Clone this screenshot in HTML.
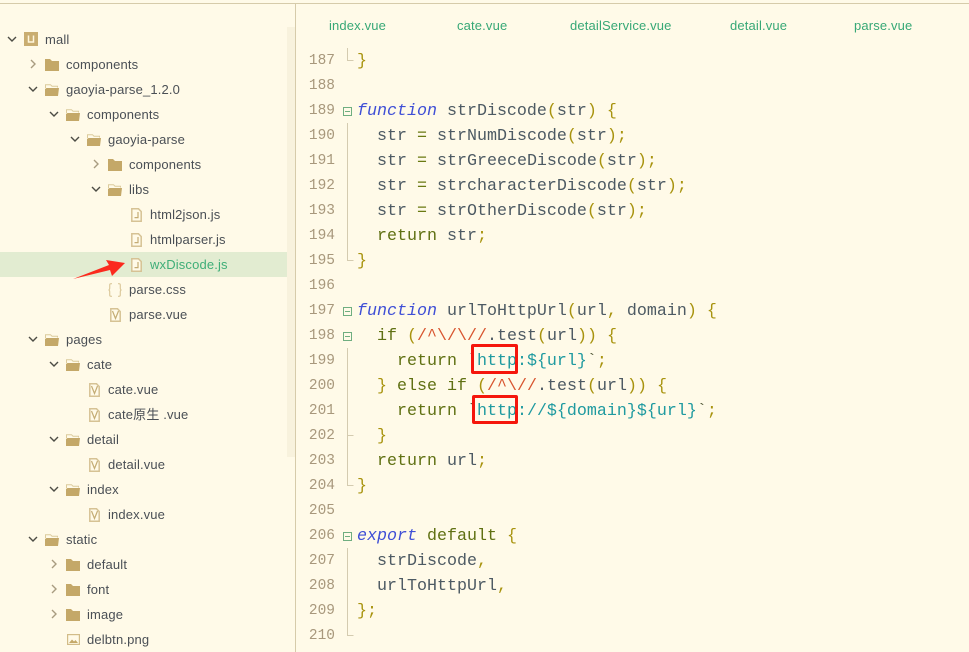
<!DOCTYPE html>
<html><head><meta charset="utf-8">
<style>
html,body{margin:0;padding:0}
body{width:969px;height:652px;position:relative;overflow:hidden;background:#fffae8;font-family:"Liberation Sans","Noto Sans CJK SC",sans-serif}
.a{position:absolute}
.t{position:absolute;font-size:13px;line-height:25px;height:25px;color:#4a4f55;white-space:pre;letter-spacing:.15px}
.tab{position:absolute;top:13px;font-size:13px;line-height:25px;color:#37a876;white-space:pre;letter-spacing:.15px}
.n{position:absolute;left:296px;width:39px;text-align:right;font:14.5px/25px "Liberation Mono",monospace;color:#a8987c;height:25px}
.c{position:absolute;left:357px;font:16.67px/25px "Liberation Mono",monospace;color:#4d5a63;white-space:pre;height:25px}
.k{color:#6a7a12}.p{color:#a8930e}.f{color:#3f4fd6;font-style:italic}.s{color:#1f9aa0}.r{color:#d8552f}.w{color:#5f7012}.b{color:#5a6040}
svg{position:absolute;overflow:visible}
</style></head><body>
<svg width="0" height="0" style="left:0;top:0">
<defs>
<symbol id="cd" viewBox="0 0 10 10"><path d="M1 3l4 4 4-4" fill="none" stroke="#4c4c44" stroke-width="1.4"/></symbol>
<symbol id="cr" viewBox="0 0 10 10"><path d="M3 1l4 4-4 4" fill="none" stroke="#a89c80" stroke-width="1.4"/></symbol>
<symbol id="fc" viewBox="0 0 14 12"><path d="M0 0h5l2 2h7v10H0z" fill="#c4a868"/></symbol>
<symbol id="fo" viewBox="0 0 14 12"><path d="M.5 4V.7h5l1.500 1.500h5.500V3.500" fill="none" stroke="#dccb9c"/><path d="M1.500 4H14l-1 8H0V5z" fill="#c4a868"/></symbol>
<symbol id="js" viewBox="0 0 11 14"><path d="M.8.800h6.700l2.700 2.700v9.700H.8z" fill="#fffae8" stroke="#d6c294" stroke-width="1.500"/><path d="M7 4v5.600H3.500" fill="none" stroke="#c4ac74" stroke-width="1.200"/></symbol>
<symbol id="vu" viewBox="0 0 11 14"><path d="M.8.800h6.700l2.700 2.700v9.700H.8z" fill="#fffae8" stroke="#d6c294" stroke-width="1.500"/><path d="M2.500 3l3 7.500 3-7.500" fill="none" stroke="#c4ac74" stroke-width="1.200"/></symbol>
<symbol id="fold" viewBox="0 0 9 9"><rect x=".5" y=".5" width="8" height="8" fill="none" stroke="#6fae80"/><path d="M2 4.500h5" stroke="#6fae80"/></symbol>
</defs>
</svg>

<div class="a" style="left:0;top:3px;width:969px;height:1px;background:#d6cbaa"></div>
<div class="a" style="left:295px;top:3px;width:1px;height:649px;background:#d6cbaa"></div>
<div class="a" style="left:287px;top:27px;width:8px;height:430px;background:#f8f2dd"></div>
<div class="a" style="left:0;top:252px;width:287px;height:25px;background:#e2ecd1"></div>

<!-- tree -->
<svg style="left:7px;top:34px" width="10" height="10"><use href="#cd"/></svg>
<svg style="left:24px;top:32px" width="14" height="14"><rect width="14" height="14" fill="#c9ad70"/><path d="M4.500 3.500v6.500h5V3.500" fill="none" stroke="#fff6dc" stroke-width="1.500"/></svg>
<div class="t" style="left:45px;top:27px">mall</div>

<svg style="left:28px;top:59px" width="10" height="10"><use href="#cr"/></svg>
<svg style="left:45px;top:59px" width="14" height="12"><use href="#fc"/></svg>
<div class="t" style="left:66px;top:52px">components</div>

<svg style="left:28px;top:84px" width="10" height="10"><use href="#cd"/></svg>
<svg style="left:45px;top:84px" width="14" height="12"><use href="#fo"/></svg>
<div class="t" style="left:66px;top:77px">gaoyia-parse_1.2.0</div>

<svg style="left:49px;top:109px" width="10" height="10"><use href="#cd"/></svg>
<svg style="left:66px;top:109px" width="14" height="12"><use href="#fo"/></svg>
<div class="t" style="left:87px;top:102px">components</div>

<svg style="left:70px;top:134px" width="10" height="10"><use href="#cd"/></svg>
<svg style="left:87px;top:134px" width="14" height="12"><use href="#fo"/></svg>
<div class="t" style="left:108px;top:127px">gaoyia-parse</div>

<svg style="left:91px;top:159px" width="10" height="10"><use href="#cr"/></svg>
<svg style="left:108px;top:159px" width="14" height="12"><use href="#fc"/></svg>
<div class="t" style="left:129px;top:152px">components</div>

<svg style="left:91px;top:184px" width="10" height="10"><use href="#cd"/></svg>
<svg style="left:108px;top:184px" width="14" height="12"><use href="#fo"/></svg>
<div class="t" style="left:129px;top:177px">libs</div>

<svg style="left:131px;top:208px" width="11" height="14"><use href="#js"/></svg>
<div class="t" style="left:150px;top:202px">html2json.js</div>
<svg style="left:131px;top:233px" width="11" height="14"><use href="#js"/></svg>
<div class="t" style="left:150px;top:227px">htmlparser.js</div>
<svg style="left:131px;top:258px" width="11" height="14"><use href="#js"/></svg>
<div class="t" style="left:150px;top:252px;color:#3fae78">wxDiscode.js</div>

<svg style="left:108px;top:283px" width="14" height="14"><path d="M4 .7H3Q1.700.7 1.700 2v3Q1.700 7 .5 7q1.200 0 1.200 2v3q0 1.300 1.300 1.300h1M10 .7h1q1.300 0 1.300 1.300v3q0 2 1.200 2-1.200 0-1.200 2v3q0 1.300-1.300 1.300h-1" fill="none" stroke="#dcc99c" stroke-width="1.200"/></svg>
<div class="t" style="left:129px;top:277px">parse.css</div>
<svg style="left:110px;top:308px" width="11" height="14"><use href="#vu"/></svg>
<div class="t" style="left:129px;top:302px">parse.vue</div>

<svg style="left:28px;top:334px" width="10" height="10"><use href="#cd"/></svg>
<svg style="left:45px;top:334px" width="14" height="12"><use href="#fo"/></svg>
<div class="t" style="left:66px;top:327px">pages</div>

<svg style="left:49px;top:359px" width="10" height="10"><use href="#cd"/></svg>
<svg style="left:66px;top:359px" width="14" height="12"><use href="#fo"/></svg>
<div class="t" style="left:87px;top:352px">cate</div>
<svg style="left:89px;top:383px" width="11" height="14"><use href="#vu"/></svg>
<div class="t" style="left:108px;top:377px">cate.vue</div>
<svg style="left:89px;top:408px" width="11" height="14"><use href="#vu"/></svg>
<div class="t" style="left:108px;top:402px">cate原生 .vue</div>

<svg style="left:49px;top:434px" width="10" height="10"><use href="#cd"/></svg>
<svg style="left:66px;top:434px" width="14" height="12"><use href="#fo"/></svg>
<div class="t" style="left:87px;top:427px">detail</div>
<svg style="left:89px;top:458px" width="11" height="14"><use href="#vu"/></svg>
<div class="t" style="left:108px;top:452px">detail.vue</div>

<svg style="left:49px;top:484px" width="10" height="10"><use href="#cd"/></svg>
<svg style="left:66px;top:484px" width="14" height="12"><use href="#fo"/></svg>
<div class="t" style="left:87px;top:477px">index</div>
<svg style="left:89px;top:508px" width="11" height="14"><use href="#vu"/></svg>
<div class="t" style="left:108px;top:502px">index.vue</div>

<svg style="left:28px;top:534px" width="10" height="10"><use href="#cd"/></svg>
<svg style="left:45px;top:534px" width="14" height="12"><use href="#fo"/></svg>
<div class="t" style="left:66px;top:527px">static</div>

<svg style="left:49px;top:559px" width="10" height="10"><use href="#cr"/></svg>
<svg style="left:66px;top:559px" width="14" height="12"><use href="#fc"/></svg>
<div class="t" style="left:87px;top:552px">default</div>
<svg style="left:49px;top:584px" width="10" height="10"><use href="#cr"/></svg>
<svg style="left:66px;top:584px" width="14" height="12"><use href="#fc"/></svg>
<div class="t" style="left:87px;top:577px">font</div>
<svg style="left:49px;top:609px" width="10" height="10"><use href="#cr"/></svg>
<svg style="left:66px;top:609px" width="14" height="12"><use href="#fc"/></svg>
<div class="t" style="left:87px;top:602px">image</div>
<svg style="left:67px;top:634px" width="13" height="11"><rect x=".6" y=".6" width="11.800" height="9.800" fill="none" stroke="#d2bc88" stroke-width="1.200"/><path d="M2 9l3-3.500 2 2 1.500-1.500L11 9z" fill="#c4a868"/></svg>
<div class="t" style="left:87px;top:627px">delbtn.png</div>

<!-- arrow -->
<svg style="left:0;top:0" width="969" height="652"><polygon points="73,279 109,265 106,260 125,263 112,276 110,270" fill="#fb2a1e"/></svg>

<!-- tabs -->
<div class="tab" style="left:329px">index.vue</div>
<div class="tab" style="left:457px">cate.vue</div>
<div class="tab" style="left:570px">detailService.vue</div>
<div class="tab" style="left:730px">detail.vue</div>
<div class="tab" style="left:854px">parse.vue</div>

<!-- line numbers -->
<div class="n" style="top:49px">187</div><div class="n" style="top:74px">188</div><div class="n" style="top:99px">189</div><div class="n" style="top:124px">190</div><div class="n" style="top:149px">191</div><div class="n" style="top:174px">192</div><div class="n" style="top:199px">193</div><div class="n" style="top:224px">194</div><div class="n" style="top:249px">195</div><div class="n" style="top:274px">196</div><div class="n" style="top:299px">197</div><div class="n" style="top:324px">198</div><div class="n" style="top:349px">199</div><div class="n" style="top:374px">200</div><div class="n" style="top:399px">201</div><div class="n" style="top:424px">202</div><div class="n" style="top:449px">203</div><div class="n" style="top:474px">204</div><div class="n" style="top:499px">205</div><div class="n" style="top:524px">206</div><div class="n" style="top:549px">207</div><div class="n" style="top:574px">208</div><div class="n" style="top:599px">209</div><div class="n" style="top:624px">210</div>

<!-- fold guides -->
<svg style="left:0;top:0" width="969" height="652">
<g fill="none" stroke="#d4cbb0">
<path d="M347.500 48v12.500h6"/>
<path d="M347.500 123v137.500h6"/>
<path d="M347.500 348v137.500h6M347.500 435.500h6"/>
<path d="M347.500 548v87.500h6"/>
</g></svg>
<svg style="left:343px;top:107px" width="9" height="9"><use href="#fold"/></svg>
<svg style="left:343px;top:307px" width="9" height="9"><use href="#fold"/></svg>
<svg style="left:343px;top:332px" width="9" height="9"><use href="#fold"/></svg>
<svg style="left:343px;top:532px" width="9" height="9"><use href="#fold"/></svg>

<!-- code -->
<div class="c" style="top:49px"><span class="p">}</span></div>
<div class="c" style="top:99px"><span class="f">function</span> strDiscode<span class="p">(</span>str<span class="p">)</span> <span class="p">{</span></div>
<div class="c" style="top:124px">  str <span class="k">=</span> strNumDiscode<span class="p">(</span>str<span class="p">);</span></div>
<div class="c" style="top:149px">  str <span class="k">=</span> strGreeceDiscode<span class="p">(</span>str<span class="p">);</span></div>
<div class="c" style="top:174px">  str <span class="k">=</span> strcharacterDiscode<span class="p">(</span>str<span class="p">);</span></div>
<div class="c" style="top:199px">  str <span class="k">=</span> strOtherDiscode<span class="p">(</span>str<span class="p">);</span></div>
<div class="c" style="top:224px">  <span class="w">return</span> str<span class="p">;</span></div>
<div class="c" style="top:249px"><span class="p">}</span></div>
<div class="c" style="top:299px"><span class="f">function</span> urlToHttpUrl<span class="p">(</span>url<span class="p">,</span> domain<span class="p">)</span> <span class="p">{</span></div>
<div class="c" style="top:324px">  <span class="w">if</span> <span class="p">(</span><span class="r">/^\/\//</span>.test<span class="p">(</span>url<span class="p">))</span> <span class="p">{</span></div>
<div class="c" style="top:349px">    <span class="w">return</span> <span class="b">`</span><span class="s">http:${url}</span><span class="b">`</span><span class="p">;</span></div>
<div class="c" style="top:374px">  <span class="p">}</span> <span class="w">else</span> <span class="w">if</span> <span class="p">(</span><span class="r">/^\//</span>.test<span class="p">(</span>url<span class="p">))</span> <span class="p">{</span></div>
<div class="c" style="top:399px">    <span class="w">return</span> <span class="b">`</span><span class="s">http://${domain}${url}</span><span class="b">`</span><span class="p">;</span></div>
<div class="c" style="top:424px">  <span class="p">}</span></div>
<div class="c" style="top:449px">  <span class="w">return</span> url<span class="p">;</span></div>
<div class="c" style="top:474px"><span class="p">}</span></div>
<div class="c" style="top:524px"><span class="f">export</span> <span class="w">default</span> <span class="p">{</span></div>
<div class="c" style="top:549px">  strDiscode<span class="p">,</span></div>
<div class="c" style="top:574px">  urlToHttpUrl<span class="p">,</span></div>
<div class="c" style="top:599px"><span class="p">};</span></div>

<!-- red boxes -->
<div class="a" style="left:471px;top:344px;width:41px;height:24px;border:3px solid #f5160c;border-radius:2px"></div>
<div class="a" style="left:472px;top:395px;width:40px;height:23px;border:3px solid #f5160c;border-radius:2px"></div>
</body></html>
